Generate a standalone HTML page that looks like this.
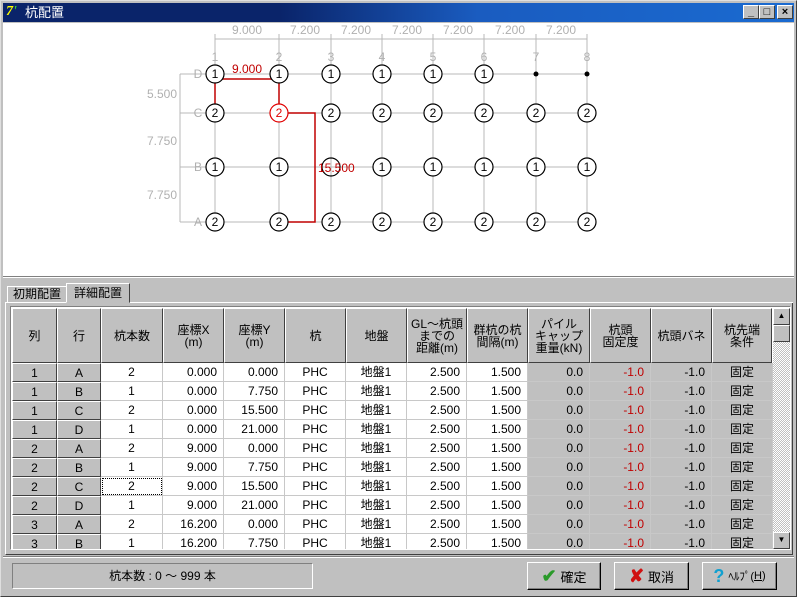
<!DOCTYPE html>
<html><head><meta charset="utf-8"><style>
*{box-sizing:border-box;margin:0;padding:0}
body{width:797px;height:597px;background:#c0c0c0;font-family:"Liberation Sans","Noto Sans CJK JP",sans-serif;font-size:12px;position:relative;overflow:hidden;color:#000}
.abs{position:absolute}
#title{left:3px;top:3px;width:791px;height:19px;background:linear-gradient(90deg,#0a246a 0%,#0a246a 35%,#1a5cc0 60%,#1a6ad0 100%);color:#fff;font-size:13px;line-height:19px;padding-left:22px}
.tb{top:5px;width:16px;height:14px;background:#c0c0c0;border:1px solid;border-color:#fff #404040 #404040 #fff;font-size:11px;line-height:12px;text-align:center;font-weight:bold}
#draw{left:3px;top:23px;width:791px;height:253px;background:#fff}
.cell{position:absolute;height:19px;line-height:18px;border-right:1px solid #c8c8c8;border-bottom:1px solid #c8c8c8;font-size:12px;white-space:nowrap;overflow:hidden}
.btncell{background:#c0c0c0;border:1px solid;border-color:#fff #404040 #404040 #fff;text-align:center}
.hd{position:absolute;top:308px;height:55px;background:#c0c0c0;border:1px solid;border-color:#fff #404040 #404040 #fff;text-align:center;display:flex;align-items:center;justify-content:center;font-size:12px;line-height:12px}
.r{text-align:right;padding-right:6px}
.c{text-align:center}
.g{background:#c0c0c0}
.w{background:#fff}
.red{color:#c00000}
.btn{top:562px;height:28px;border:1px solid;border-color:#fff #000 #000 #fff;box-shadow:inset -1px -1px 0 #808080;background:#c0c0c0;font-size:13px;display:flex;align-items:center;justify-content:center}
</style></head><body>
<div class="abs" style="left:0;top:0;width:797px;height:597px;border:1px solid;border-color:#dfdfdf #404040 #404040 #dfdfdf"></div>
<div id="title" class="abs">杭配置
<div class="abs" style="left:3px;top:1px;width:16px;height:16px;font:bold italic 14px 'Liberation Serif',serif;color:#ff0;line-height:16px">7<span style="color:#3c3">'</span></div>
</div>
<div class="abs tb" style="left:743px">_</div>
<div class="abs tb" style="left:759px">□</div>
<div class="abs tb" style="left:777px">×</div>
<div id="draw" class="abs">
<svg width="791" height="253" viewBox="3 23 791 253" style="position:absolute;left:0;top:0" font-family="Liberation Sans,sans-serif">
<g stroke="#b8b8b8" stroke-width="1" fill="none">
<line x1="215" y1="39" x2="587" y2="39"/>
<line x1="215" y1="34" x2="215" y2="222"/><line x1="279" y1="34" x2="279" y2="222"/><line x1="331" y1="34" x2="331" y2="222"/><line x1="382" y1="34" x2="382" y2="222"/><line x1="433" y1="34" x2="433" y2="222"/><line x1="484" y1="34" x2="484" y2="222"/><line x1="536" y1="34" x2="536" y2="222"/><line x1="587" y1="34" x2="587" y2="222"/>
<line x1="180" y1="74" x2="587" y2="74"/><line x1="180" y1="113" x2="587" y2="113"/><line x1="180" y1="167" x2="587" y2="167"/><line x1="180" y1="222" x2="587" y2="222"/>
<line x1="180" y1="74" x2="180" y2="222"/>
</g>
<g fill="#b0b0b0" font-size="12" text-anchor="middle">
<text x="247" y="34">9.000</text><text x="305" y="34">7.200</text><text x="356" y="34">7.200</text><text x="407" y="34">7.200</text><text x="458" y="34">7.200</text><text x="510" y="34">7.200</text><text x="561" y="34">7.200</text>
<text x="215" y="61">1</text><text x="279" y="61">2</text><text x="331" y="61">3</text><text x="382" y="61">4</text><text x="433" y="61">5</text><text x="484" y="61">6</text><text x="536" y="61">7</text><text x="587" y="61">8</text>
<text x="198" y="78">D</text><text x="198" y="117">C</text><text x="198" y="171">B</text><text x="198" y="226">A</text>
<text x="162" y="98">5.500</text><text x="162" y="145">7.750</text><text x="162" y="199">7.750</text>
</g>
<g stroke="#c00000" stroke-width="1.5" fill="none">
<polyline points="215,108 215,79 279,79 279,108"/>
<polyline points="288,113 315,113 315,222 288,222"/>
</g>
<text x="247" y="73" fill="#c00000" font-size="12" text-anchor="middle">9.000</text>
<g stroke="#000" stroke-width="1.2" fill="#fff" font-size="12" text-anchor="middle">
<circle cx="215" cy="74" r="9"/><circle cx="279" cy="74" r="9"/><circle cx="331" cy="74" r="9"/><circle cx="382" cy="74" r="9"/><circle cx="433" cy="74" r="9"/><circle cx="484" cy="74" r="9"/>
<circle cx="215" cy="113" r="9"/><circle cx="279" cy="113" r="9" stroke="#e00000"/><circle cx="331" cy="113" r="9"/><circle cx="382" cy="113" r="9"/><circle cx="433" cy="113" r="9"/><circle cx="484" cy="113" r="9"/><circle cx="536" cy="113" r="9"/><circle cx="587" cy="113" r="9"/>
<circle cx="215" cy="167" r="9"/><circle cx="279" cy="167" r="9"/><circle cx="382" cy="167" r="9"/><circle cx="433" cy="167" r="9"/><circle cx="484" cy="167" r="9"/><circle cx="536" cy="167" r="9"/><circle cx="587" cy="167" r="9"/>
<circle cx="215" cy="222" r="9"/><circle cx="279" cy="222" r="9"/><circle cx="331" cy="222" r="9"/><circle cx="382" cy="222" r="9"/><circle cx="433" cy="222" r="9"/><circle cx="484" cy="222" r="9"/><circle cx="536" cy="222" r="9"/><circle cx="587" cy="222" r="9"/>
</g>
<circle cx="536" cy="74" r="2.5" fill="#000"/><circle cx="587" cy="74" r="2.5" fill="#000"/>
<g fill="#000" font-size="12" text-anchor="middle">
<text x="215" y="78">1</text><text x="279" y="78">1</text><text x="331" y="78">1</text><text x="382" y="78">1</text><text x="433" y="78">1</text><text x="484" y="78">1</text>
<text x="215" y="117">2</text><text x="279" y="117" fill="#e00000">2</text><text x="331" y="117">2</text><text x="382" y="117">2</text><text x="433" y="117">2</text><text x="484" y="117">2</text><text x="536" y="117">2</text><text x="587" y="117">2</text>
<text x="215" y="171">1</text><text x="279" y="171">1</text><text x="382" y="171">1</text><text x="433" y="171">1</text><text x="484" y="171">1</text><text x="536" y="171">1</text><text x="587" y="171">1</text>
<text x="215" y="226">2</text><text x="279" y="226">2</text><text x="331" y="226">2</text><text x="382" y="226">2</text><text x="433" y="226">2</text><text x="484" y="226">2</text><text x="536" y="226">2</text><text x="587" y="226">2</text>
</g>
<circle cx="331" cy="167" r="9" stroke="#000" stroke-width="1.2" fill="none"/>
<text x="318" y="172" fill="#c00000" font-size="12">15.500</text>
</svg>
</div>
<div class="abs" style="left:3px;top:276px;width:791px;height:2px;border-top:1px solid #808080;border-bottom:1px solid #fff"></div>
<div class="abs" style="left:7px;top:286px;width:60px;height:17px;border:1px solid;border-color:#fff #404040 transparent #fff;font-size:12px;line-height:15px;text-align:center">初期配置</div>
<div class="abs" style="left:66px;top:283px;width:64px;height:20px;border:1px solid;border-color:#fff #404040 transparent #fff;background:#c0c0c0;font-size:12px;line-height:18px;text-align:center">詳細配置</div>
<div class="abs" style="left:5px;top:302px;width:788px;height:253px;border:1px solid;border-color:#fff #404040 #404040 #fff;border-top:none"></div>
<div class="abs" style="left:5px;top:302px;width:61px;height:1px;background:#fff"></div>
<div class="abs" style="left:130px;top:302px;width:663px;height:1px;background:#fff"></div>
<div class="abs" style="left:10px;top:306px;width:781px;height:244px;background:#fff;border:1px solid;border-color:#808080 #fff #fff #808080"></div>
<div class="hd" style="left:12px;width:45px">列</div>
<div class="hd" style="left:57px;width:44px">行</div>
<div class="hd" style="left:101px;width:62px">杭本数</div>
<div class="hd" style="left:163px;width:61px">座標X<br>(m)</div>
<div class="hd" style="left:224px;width:61px">座標Y<br>(m)</div>
<div class="hd" style="left:285px;width:61px">杭</div>
<div class="hd" style="left:346px;width:61px">地盤</div>
<div class="hd" style="left:407px;width:60px">GL～杭頭<br>までの<br>距離(m)</div>
<div class="hd" style="left:467px;width:61px">群杭の杭<br>間隔(m)</div>
<div class="hd" style="left:528px;width:62px">パイル<br>キャップ<br>重量(kN)</div>
<div class="hd" style="left:590px;width:61px">杭頭<br>固定度</div>
<div class="hd" style="left:651px;width:61px">杭頭バネ</div>
<div class="hd" style="left:712px;width:60px">杭先端<br>条件</div>
<div class="abs" style="left:773px;top:308px;width:17px;height:241px;background:repeating-conic-gradient(#fff 0 25%,#c0c0c0 0 50%) 0 0/2px 2px"></div>
<div class="abs tb" style="left:773px;top:308px;width:17px;height:17px;font-size:8px;line-height:14px">▲</div>
<div class="abs tb" style="left:773px;top:325px;width:17px;height:17px"></div>
<div class="abs tb" style="left:773px;top:532px;width:17px;height:17px;font-size:8px;line-height:14px">▼</div>
<div class="abs" style="left:12px;top:363px;width:761px;height:186px;overflow:hidden">
<div style="position:relative">
<div class="cell btncell" style="left:0;top:0;width:45px">1</div><div class="cell btncell" style="left:45px;top:0;width:44px">A</div><div class="cell w c" style="left:89px;top:0;width:62px">2</div><div class="cell w r" style="left:151px;top:0;width:61px">0.000</div><div class="cell w r" style="left:212px;top:0;width:61px">0.000</div><div class="cell w c" style="left:273px;top:0;width:61px">PHC</div><div class="cell w c" style="left:334px;top:0;width:61px">地盤1</div><div class="cell w r" style="left:395px;top:0;width:60px">2.500</div><div class="cell w r" style="left:455px;top:0;width:61px">1.500</div><div class="cell g r" style="left:516px;top:0;width:62px">0.0</div><div class="cell g r red" style="left:578px;top:0;width:61px">-1.0</div><div class="cell g r" style="left:639px;top:0;width:61px">-1.0</div><div class="cell g c" style="left:700px;top:0;width:61px">固定</div>
<div class="cell btncell" style="left:0;top:19px;width:45px">1</div><div class="cell btncell" style="left:45px;top:19px;width:44px">B</div><div class="cell w c" style="left:89px;top:19px;width:62px">1</div><div class="cell w r" style="left:151px;top:19px;width:61px">0.000</div><div class="cell w r" style="left:212px;top:19px;width:61px">7.750</div><div class="cell w c" style="left:273px;top:19px;width:61px">PHC</div><div class="cell w c" style="left:334px;top:19px;width:61px">地盤1</div><div class="cell w r" style="left:395px;top:19px;width:60px">2.500</div><div class="cell w r" style="left:455px;top:19px;width:61px">1.500</div><div class="cell g r" style="left:516px;top:19px;width:62px">0.0</div><div class="cell g r red" style="left:578px;top:19px;width:61px">-1.0</div><div class="cell g r" style="left:639px;top:19px;width:61px">-1.0</div><div class="cell g c" style="left:700px;top:19px;width:61px">固定</div>
<div class="cell btncell" style="left:0;top:38px;width:45px">1</div><div class="cell btncell" style="left:45px;top:38px;width:44px">C</div><div class="cell w c" style="left:89px;top:38px;width:62px">2</div><div class="cell w r" style="left:151px;top:38px;width:61px">0.000</div><div class="cell w r" style="left:212px;top:38px;width:61px">15.500</div><div class="cell w c" style="left:273px;top:38px;width:61px">PHC</div><div class="cell w c" style="left:334px;top:38px;width:61px">地盤1</div><div class="cell w r" style="left:395px;top:38px;width:60px">2.500</div><div class="cell w r" style="left:455px;top:38px;width:61px">1.500</div><div class="cell g r" style="left:516px;top:38px;width:62px">0.0</div><div class="cell g r red" style="left:578px;top:38px;width:61px">-1.0</div><div class="cell g r" style="left:639px;top:38px;width:61px">-1.0</div><div class="cell g c" style="left:700px;top:38px;width:61px">固定</div>
<div class="cell btncell" style="left:0;top:57px;width:45px">1</div><div class="cell btncell" style="left:45px;top:57px;width:44px">D</div><div class="cell w c" style="left:89px;top:57px;width:62px">1</div><div class="cell w r" style="left:151px;top:57px;width:61px">0.000</div><div class="cell w r" style="left:212px;top:57px;width:61px">21.000</div><div class="cell w c" style="left:273px;top:57px;width:61px">PHC</div><div class="cell w c" style="left:334px;top:57px;width:61px">地盤1</div><div class="cell w r" style="left:395px;top:57px;width:60px">2.500</div><div class="cell w r" style="left:455px;top:57px;width:61px">1.500</div><div class="cell g r" style="left:516px;top:57px;width:62px">0.0</div><div class="cell g r red" style="left:578px;top:57px;width:61px">-1.0</div><div class="cell g r" style="left:639px;top:57px;width:61px">-1.0</div><div class="cell g c" style="left:700px;top:57px;width:61px">固定</div>
<div class="cell btncell" style="left:0;top:76px;width:45px">2</div><div class="cell btncell" style="left:45px;top:76px;width:44px">A</div><div class="cell w c" style="left:89px;top:76px;width:62px">2</div><div class="cell w r" style="left:151px;top:76px;width:61px">9.000</div><div class="cell w r" style="left:212px;top:76px;width:61px">0.000</div><div class="cell w c" style="left:273px;top:76px;width:61px">PHC</div><div class="cell w c" style="left:334px;top:76px;width:61px">地盤1</div><div class="cell w r" style="left:395px;top:76px;width:60px">2.500</div><div class="cell w r" style="left:455px;top:76px;width:61px">1.500</div><div class="cell g r" style="left:516px;top:76px;width:62px">0.0</div><div class="cell g r red" style="left:578px;top:76px;width:61px">-1.0</div><div class="cell g r" style="left:639px;top:76px;width:61px">-1.0</div><div class="cell g c" style="left:700px;top:76px;width:61px">固定</div>
<div class="cell btncell" style="left:0;top:95px;width:45px">2</div><div class="cell btncell" style="left:45px;top:95px;width:44px">B</div><div class="cell w c" style="left:89px;top:95px;width:62px">1</div><div class="cell w r" style="left:151px;top:95px;width:61px">9.000</div><div class="cell w r" style="left:212px;top:95px;width:61px">7.750</div><div class="cell w c" style="left:273px;top:95px;width:61px">PHC</div><div class="cell w c" style="left:334px;top:95px;width:61px">地盤1</div><div class="cell w r" style="left:395px;top:95px;width:60px">2.500</div><div class="cell w r" style="left:455px;top:95px;width:61px">1.500</div><div class="cell g r" style="left:516px;top:95px;width:62px">0.0</div><div class="cell g r red" style="left:578px;top:95px;width:61px">-1.0</div><div class="cell g r" style="left:639px;top:95px;width:61px">-1.0</div><div class="cell g c" style="left:700px;top:95px;width:61px">固定</div>
<div class="cell btncell" style="left:0;top:114px;width:45px">2</div><div class="cell btncell" style="left:45px;top:114px;width:44px">C</div><div class="cell w c" style="left:89px;top:114px;width:62px;outline:1px dotted #000;outline-offset:-2px">2</div><div class="cell w r" style="left:151px;top:114px;width:61px">9.000</div><div class="cell w r" style="left:212px;top:114px;width:61px">15.500</div><div class="cell w c" style="left:273px;top:114px;width:61px">PHC</div><div class="cell w c" style="left:334px;top:114px;width:61px">地盤1</div><div class="cell w r" style="left:395px;top:114px;width:60px">2.500</div><div class="cell w r" style="left:455px;top:114px;width:61px">1.500</div><div class="cell g r" style="left:516px;top:114px;width:62px">0.0</div><div class="cell g r red" style="left:578px;top:114px;width:61px">-1.0</div><div class="cell g r" style="left:639px;top:114px;width:61px">-1.0</div><div class="cell g c" style="left:700px;top:114px;width:61px">固定</div>
<div class="cell btncell" style="left:0;top:133px;width:45px">2</div><div class="cell btncell" style="left:45px;top:133px;width:44px">D</div><div class="cell w c" style="left:89px;top:133px;width:62px">1</div><div class="cell w r" style="left:151px;top:133px;width:61px">9.000</div><div class="cell w r" style="left:212px;top:133px;width:61px">21.000</div><div class="cell w c" style="left:273px;top:133px;width:61px">PHC</div><div class="cell w c" style="left:334px;top:133px;width:61px">地盤1</div><div class="cell w r" style="left:395px;top:133px;width:60px">2.500</div><div class="cell w r" style="left:455px;top:133px;width:61px">1.500</div><div class="cell g r" style="left:516px;top:133px;width:62px">0.0</div><div class="cell g r red" style="left:578px;top:133px;width:61px">-1.0</div><div class="cell g r" style="left:639px;top:133px;width:61px">-1.0</div><div class="cell g c" style="left:700px;top:133px;width:61px">固定</div>
<div class="cell btncell" style="left:0;top:152px;width:45px">3</div><div class="cell btncell" style="left:45px;top:152px;width:44px">A</div><div class="cell w c" style="left:89px;top:152px;width:62px">2</div><div class="cell w r" style="left:151px;top:152px;width:61px">16.200</div><div class="cell w r" style="left:212px;top:152px;width:61px">0.000</div><div class="cell w c" style="left:273px;top:152px;width:61px">PHC</div><div class="cell w c" style="left:334px;top:152px;width:61px">地盤1</div><div class="cell w r" style="left:395px;top:152px;width:60px">2.500</div><div class="cell w r" style="left:455px;top:152px;width:61px">1.500</div><div class="cell g r" style="left:516px;top:152px;width:62px">0.0</div><div class="cell g r red" style="left:578px;top:152px;width:61px">-1.0</div><div class="cell g r" style="left:639px;top:152px;width:61px">-1.0</div><div class="cell g c" style="left:700px;top:152px;width:61px">固定</div>
<div class="cell btncell" style="left:0;top:171px;width:45px">3</div><div class="cell btncell" style="left:45px;top:171px;width:44px">B</div><div class="cell w c" style="left:89px;top:171px;width:62px">1</div><div class="cell w r" style="left:151px;top:171px;width:61px">16.200</div><div class="cell w r" style="left:212px;top:171px;width:61px">7.750</div><div class="cell w c" style="left:273px;top:171px;width:61px">PHC</div><div class="cell w c" style="left:334px;top:171px;width:61px">地盤1</div><div class="cell w r" style="left:395px;top:171px;width:60px">2.500</div><div class="cell w r" style="left:455px;top:171px;width:61px">1.500</div><div class="cell g r" style="left:516px;top:171px;width:62px">0.0</div><div class="cell g r red" style="left:578px;top:171px;width:61px">-1.0</div><div class="cell g r" style="left:639px;top:171px;width:61px">-1.0</div><div class="cell g c" style="left:700px;top:171px;width:61px">固定</div>
</div></div>
<div class="abs" style="left:3px;top:556px;width:791px;height:2px;border-top:1px solid #808080;border-bottom:1px solid #fff"></div>
<div class="abs" style="left:12px;top:563px;width:301px;height:26px;border:1px solid;border-color:#808080 #fff #fff #808080;font-size:12px;line-height:24px;text-align:center">杭本数 : 0 ～ 999 本</div>
<div class="abs btn" style="left:527px;width:74px"><span style="color:#2a9a2a;font-size:18px;font-weight:bold;margin-right:4px">✔</span>確定</div>
<div class="abs btn" style="left:614px;width:75px"><span style="color:#d01010;font-size:18px;font-weight:bold;margin-right:4px">✘</span>取消</div>
<div class="abs btn" style="left:702px;width:75px;font-size:11px"><span style="color:#10a0d0;font-size:18px;font-weight:bold;margin-right:4px">?</span>ﾍﾙﾌﾟ(<u>H</u>)</div>
</body></html>
